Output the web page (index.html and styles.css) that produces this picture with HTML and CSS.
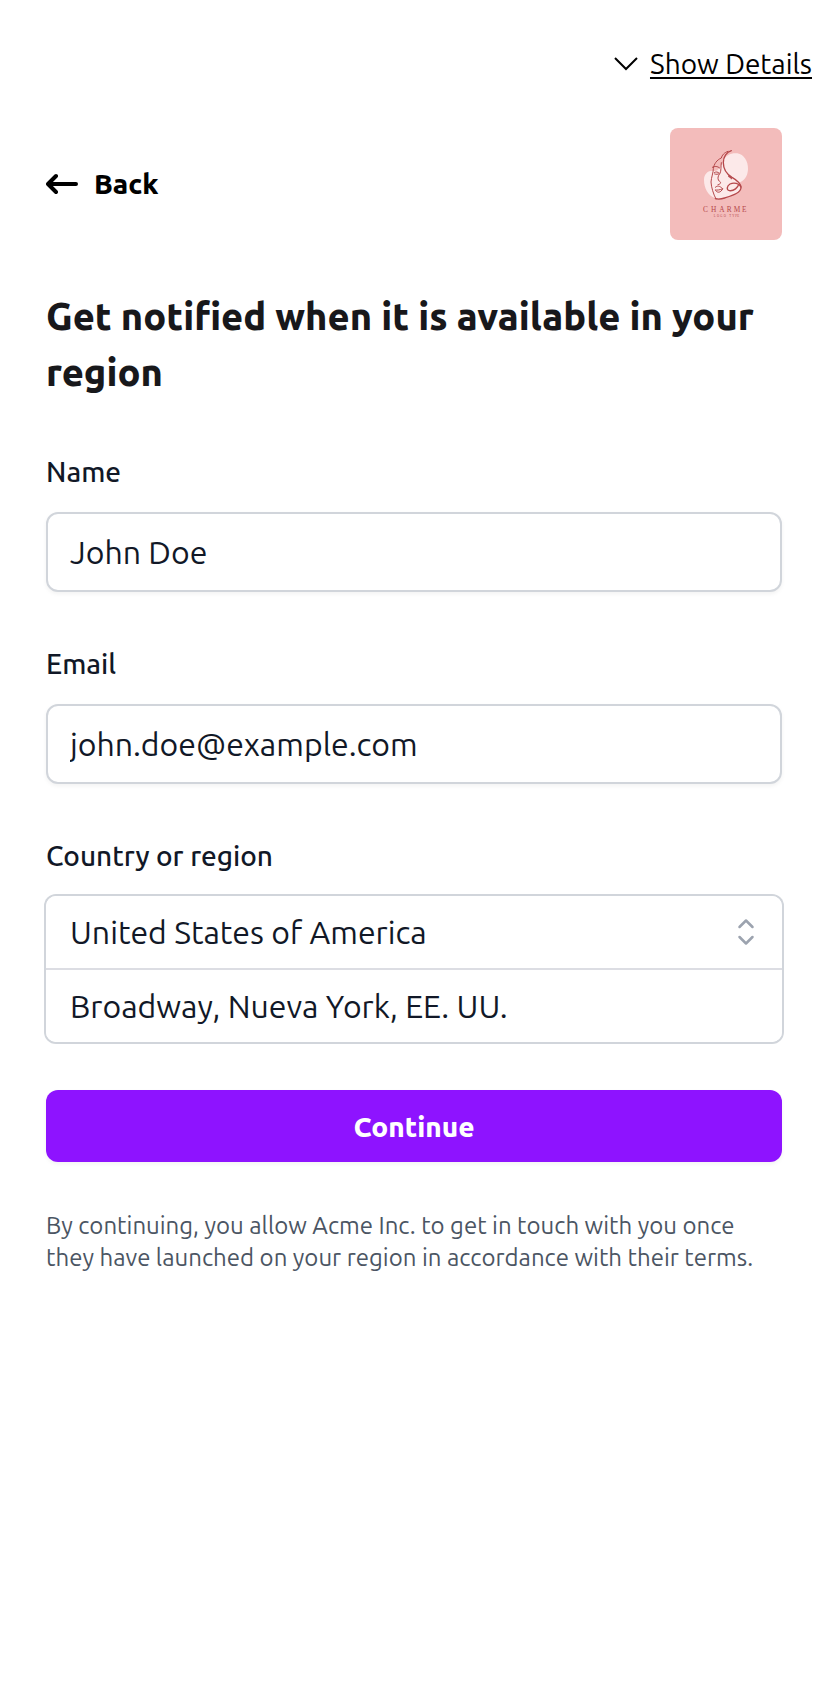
FILE: index.html
```html
<!DOCTYPE html>
<html lang="en">
<head>
<meta charset="utf-8">
<meta name="viewport" content="width=device-width, initial-scale=1">
<title>Get notified</title>
<link rel="stylesheet" href="styles.css">
</head>
<body>
<div class="topbar">
  <button type="button" class="details-toggle">
    <svg class="chevron" viewBox="0 0 24 24" fill="none" stroke="currentColor" stroke-width="2" aria-hidden="true"><path d="M1 6l11 11L23 6"/></svg>
    <span class="details-text">Show Details</span>
  </button>
</div>
<main class="page">
  <header class="brand-row">
    <a href="#" class="back">
      <svg class="back-arrow" viewBox="0 0 32 24" fill="none" stroke="currentColor" stroke-width="4" stroke-linecap="round" stroke-linejoin="round" aria-hidden="true"><path d="M30 12H3M10 4L2 12l8 8"/></svg>
      <span>Back</span>
    </a>
    <svg class="logo" viewBox="30 24 336 336" role="img" aria-label="Charme">
      <rect x="30" y="24" width="336" height="336" fill="#f3bcbb"/>
      <path fill="#fce9e9" d="M190 122C196 106 214 98 232 100C252 103 265 124 264 148C263 170 252 182 238 188C244 200 240 214 226 222C206 232 178 238 164 234C144 226 132 204 132 180C132 160 146 150 164 153C174 152 184 140 190 122Z"/>
      <g fill="none" stroke="#b5484b" stroke-width="3" stroke-linecap="round" stroke-linejoin="round">
        <path d="M214 92C200 96 190 110 190 128C190 146 200 162 216 172C230 180 242 190 243 202C244 218 218 226 194 234C182 238 170 237 166 236" stroke-width="4"/>
        <path d="M204 94C192 98 186 106 184 114C170 120 162 132 160 146C160 158 154 172 153 186C154 202 160 222 168 237"/>
        <path d="M157 142C163 138 172 138 179 144M163 158C168 154 174 156 178 160C174 164 168 163 164 162"/>
        <path d="M184 128C182 142 184 152 180 160C174 168 172 174 176 182C184 186 184 192 174 194"/>
        <path d="M166 202C172 196 178 197 188 206C180 210 172 211 166 210M167 212C173 220 182 218 188 207"/>
        <path d="M206 168C211 174 214 171 214 176M243 201C238 190 222 186 210 192C200 198 199 210 208 212C222 214 234 202 236 193" stroke-width="4"/>
      </g>
      <text class="logo-name" x="129 153 178 200 221 246" y="275">CHARME</text>
      <text class="logo-tag" x="161 171 181 191 208 217 226 232" y="291">LOGOTYPE</text>
    </svg>
  </header>
  <h1 class="title">Get notified when it is available in your region</h1>
  <form class="form">
    <div class="fields">
      <div class="field">
        <label class="label" for="name">Name</label>
        <input class="input" id="name" type="text" value="John Doe">
      </div>
      <div class="field">
        <label class="label" for="email">Email</label>
        <input class="input" id="email" type="email" value="john.doe@example.com">
      </div>
      <div class="field">
        <label class="label" for="country">Country or region</label>
        <div class="group">
          <div class="select-wrap">
            <select class="group-control" id="country"><option>United States of America</option></select>
            <svg class="select-icon" viewBox="0 0 20 28" fill="none" stroke="#9ca3af" stroke-width="2.500" stroke-linecap="round" stroke-linejoin="round" aria-hidden="true"><path d="M3.500 9L10 2.500 16.500 9M3.500 19l6.500 6.500 6.500-6.500"/></svg>
          </div>
          <input class="group-control" type="text" aria-label="Address" value="Broadway, Nueva York, EE. UU.">
        </div>
      </div>
    </div>
    <button type="submit" class="submit">Continue</button>
  </form>
  <p class="terms">By continuing, you allow Acme Inc. to get in touch with you once they have launched on your region in accordance with their terms.</p>
</main>
</body>
</html>
```
FILE: styles.css
```css
*, *::before, *::after { box-sizing: border-box; }

body {
  margin: 0;
  background: #fff;
  color: #111827;
  font-family: Ubuntu, "Noto Sans", sans-serif;
}

button, input, select { font: inherit; color: inherit; margin: 0; }

.topbar {
  display: flex;
  justify-content: flex-end;
  padding: 44px 14px 0;
}

.details-toggle {
  display: flex;
  align-items: center;
  gap: 12px;
  padding: 0;
  border: 0;
  background: none;
  color: #000;
  font-size: 28px;
  line-height: 40px;
  cursor: pointer;
}

.details-text {
  text-decoration: underline;
  text-decoration-thickness: 2px;
  text-underline-offset: 3px;
}

.chevron { width: 24px; height: 24px; }

.page { padding: 44px 44px 48px 46px; }

.brand-row {
  display: flex;
  align-items: center;
  justify-content: space-between;
}

.back {
  display: flex;
  align-items: center;
  gap: 16px;
  color: #000;
  font-size: 28px;
  font-weight: 800;
  line-height: 40px;
  text-decoration: none;
}

.back-arrow { width: 32px; height: 24px; }

.logo {
  display: block;
  width: 112px;
  height: 112px;
  border-radius: 8px;
}

.logo-name {
  font-family: "Liberation Serif", serif;
  font-size: 22px;
  fill: #b5484b;
}

.logo-tag {
  font-family: "Liberation Serif", serif;
  font-size: 9px;
  fill: #b5484b;
}

.title {
  margin: 48px 0 52px;
  color: #18181b;
  font-size: 38px;
  font-weight: 800;
  line-height: 56px;
}

.form {
  display: flex;
  flex-direction: column;
  gap: 48px;
}

.fields { display: flex; flex-direction: column; gap: 52px; }

.field { display: flex; flex-direction: column; gap: 20px; }

.label {
  font-size: 28px;
  font-weight: 500;
  line-height: 40px;
}

.input {
  width: 100%;
  height: 80px;
  padding: 0 22px;
  border: 2px solid #d1d5db;
  border-radius: 12px;
  background: #fff;
  box-shadow: 0 2px 4px rgba(0, 0, 0, 0.05);
  font-size: 32px;
}

.group {
  border-radius: 10px;
  box-shadow: 0 0 0 2px #d1d5db;
}

.select-wrap { position: relative; border-bottom: 2px solid #dcdde3; }

.group-control {
  display: block;
  width: 100%;
  height: 72px;
  padding: 0 24px;
  border: 0;
  border-radius: 10px;
  background: #fff;
  font-size: 32px;
  appearance: none;
}

.select-icon {
  position: absolute;
  top: 22px;
  right: 26px;
  width: 20px;
  height: 28px;
  pointer-events: none;
}

.submit {
  height: 72px;
  border: 0;
  border-radius: 12px;
  background: #8e13ff;
  box-shadow: 0 2px 4px rgba(0, 0, 0, 0.05);
  color: #fff;
  font-size: 28px;
  font-weight: 800;
  cursor: pointer;
}

.terms {
  margin: 48px 0 0;
  color: #4b5563;
  font-size: 24px;
  line-height: 32px;
}
```
